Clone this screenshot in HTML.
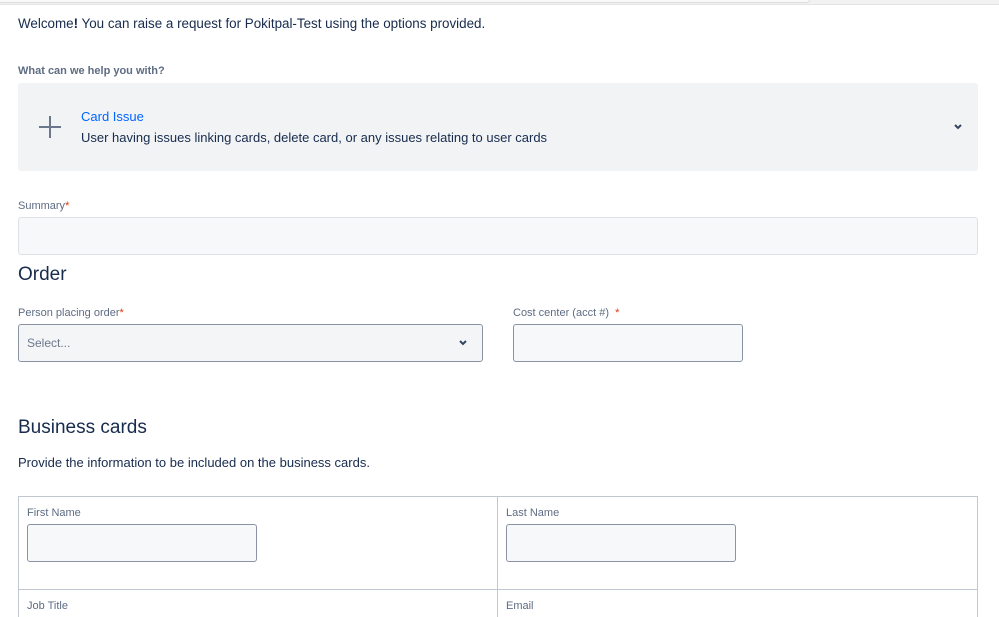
<!DOCTYPE html>
<html><head><style>
*{box-sizing:border-box;margin:0;padding:0}
html,body{width:999px;height:617px;overflow:hidden}
body{background:#fff;font-family:"Liberation Sans",sans-serif;position:relative;color:#172b4d}
.a{position:absolute}
.lbl{font-size:11px;color:#5e6c84}
.req{color:#de350b}
.inp{position:absolute;background:#f7f8fa;border:1.5px solid #8993a4;border-radius:3px}
</style></head><body>
<div class="a" style="left:0;top:0;width:999px;height:5px;background:#f2f2f2;border-bottom:1px solid #e4e4e4"></div>
<div class="a" style="left:0;top:0;width:810px;height:3px;background:#f8f8f8;border-bottom:1px solid #ddd;border-right:1px solid #ddd;border-radius:0 0 4px 0"></div>
<div class="a" style="left:18px;top:16px;font-size:13.4px;color:#172b4d">Welcome<b>!</b> You can raise a request for Pokitpal-Test using the options provided.</div>
<div class="a" style="left:18px;top:65px;font-size:11px;color:#5e6c84;font-weight:bold">What can we help you with?</div>
<div class="a" style="left:18px;top:83px;width:960px;height:88px;background:#f2f3f5;border-radius:3px"></div>
<div class="a" style="left:39px;top:126px;width:22px;height:2px;background:#6b778c"></div>
<div class="a" style="left:49px;top:116px;width:2px;height:22px;background:#6b778c"></div>
<div class="a" style="left:81px;top:109px;font-size:13px;color:#0065ff">Card Issue</div>
<div class="a" style="left:81px;top:130px;font-size:13px;color:#172b4d">User having issues linking cards, delete card, or any issues relating to user cards</div>
<svg class="a" style="left:953px;top:123px" width="10" height="8" viewBox="0 0 10 8"><path d="M2 2l3 3 3-3" stroke="#344563" stroke-width="2" fill="none"/></svg>
<div class="a lbl" style="left:18px;top:200px">Summary<span class="req">*</span></div>
<div class="a" style="left:18px;top:217px;width:960px;height:38px;background:#f7f8fa;border:1px solid #dfe1e6;border-radius:3px"></div>
<div class="a" style="left:18px;top:264px;font-size:19px;color:#172b4d">Order</div>
<div class="a lbl" style="left:18px;top:307px">Person placing order<span class="req">*</span></div>
<div class="inp" style="left:18px;top:324px;width:465px;height:38px;background:#f4f5f7"></div>
<div class="a" style="left:27px;top:336px;font-size:12px;color:#6b778c">Select...</div>
<svg class="a" style="left:458px;top:339px" width="10" height="8" viewBox="0 0 10 8"><path d="M2 2l3 3 3-3" stroke="#344563" stroke-width="2" fill="none"/></svg>
<div class="a lbl" style="left:513px;top:307px">Cost center (acct #) &nbsp;<span class="req">*</span></div>
<div class="inp" style="left:513px;top:324px;width:230px;height:38px"></div>
<div class="a" style="left:18px;top:417px;font-size:19px;color:#172b4d">Business cards</div>
<div class="a" style="left:18px;top:455px;font-size:13px;color:#172b4d">Provide the information to be included on the business cards.</div>
<div class="a" style="left:18px;top:496px;width:960px;height:121px;border:1px solid #c1c7d0;border-bottom:none"></div>
<div class="a" style="left:497px;top:496px;width:1px;height:121px;background:#c1c7d0"></div>
<div class="a" style="left:18px;top:589px;width:960px;height:1px;background:#c1c7d0"></div>
<div class="a lbl" style="left:27px;top:507px">First Name</div>
<div class="inp" style="left:27px;top:524px;width:230px;height:38px"></div>
<div class="a lbl" style="left:506px;top:507px">Last Name</div>
<div class="inp" style="left:506px;top:524px;width:230px;height:38px"></div>
<div class="a lbl" style="left:27px;top:600px">Job Title</div>
<div class="a lbl" style="left:506px;top:600px">Email</div>
</body></html>
